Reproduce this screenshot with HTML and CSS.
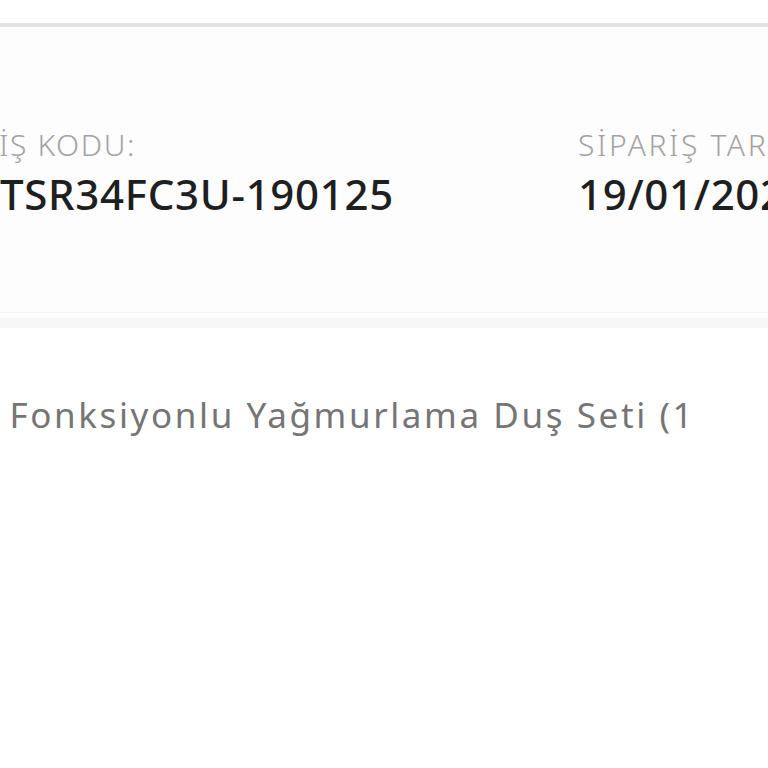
FILE: index.html
```html
<!DOCTYPE html>
<html lang="tr">
<head>
    <meta charset="UTF-8">
    <meta name="viewport" content="width=device-width, initial-scale=1.0">
    <title>Sipariş Detayı</title>
    <link rel="stylesheet" href="styles.css">
</head>
<body>

    <div class="top-bar"></div>

    <div class="order-summary">
        <div class="summary-item item-code">
            <div class="summary-label">SİPARİŞ KODU:</div>
            <div class="summary-value">TSR34FC3U-190125</div>
        </div>
        <div class="summary-item item-date">
            <div class="summary-label">SİPARİŞ TARİHİ:</div>
            <div class="summary-value">19/01/2025</div>
        </div>
    </div>

    <div class="order-items">
        <div class="product-name">Çok Fonksiyonlu Yağmurlama Duş Seti (1</div>
    </div>

</body>
</html>
```

FILE: styles.css
```css
body {
    margin: 0;
    height: 100vh;
    overflow: hidden;
    background: #ffffff;
    font-family: "Noto Sans", "Open Sans", sans-serif;
}
.top-bar {
    height: 23px;
    border-bottom: 4px solid #e3e3e3;
    background: #ffffff;
}
.order-summary {
    display: flex;
    background: #fdfdfd;
    padding-top: 100px; /* etiketler biraz aşağıda */
    height: 185px;
    border-bottom: 1px solid #f3f3f3;
    white-space: nowrap;
    overflow: hidden;
}
.summary-item {
    display: flex;
    flex-direction: column;
}
.item-code {
    flex: 0 0 578px;
}
.item-code .summary-label {
    text-indent: -87px; /* baş kısmı ekran dışında */
}
.item-date .summary-label {
    letter-spacing: 2.6px;
}
.summary-label {
    font-size: 30px;
    line-height: 36px;
    color: #a3a3a3;
    font-weight: 300;
    letter-spacing: 1.6px;
}
.summary-value {
    margin-top: 6px;
    font-size: 42px;
    line-height: 50px;
    color: #1f1f1f;
    font-weight: 500;
    letter-spacing: 0.7px;
}
.order-items {
    border-top: 10px solid #f7f7f7;
    margin-top: 5px;
    padding-top: 65px;
    overflow: hidden;
}
.product-name {
    font-size: 35px;
    line-height: 44px;
    color: #757575;
    white-space: nowrap;
    letter-spacing: 2.6px;
    text-indent: -72px;
}
```
